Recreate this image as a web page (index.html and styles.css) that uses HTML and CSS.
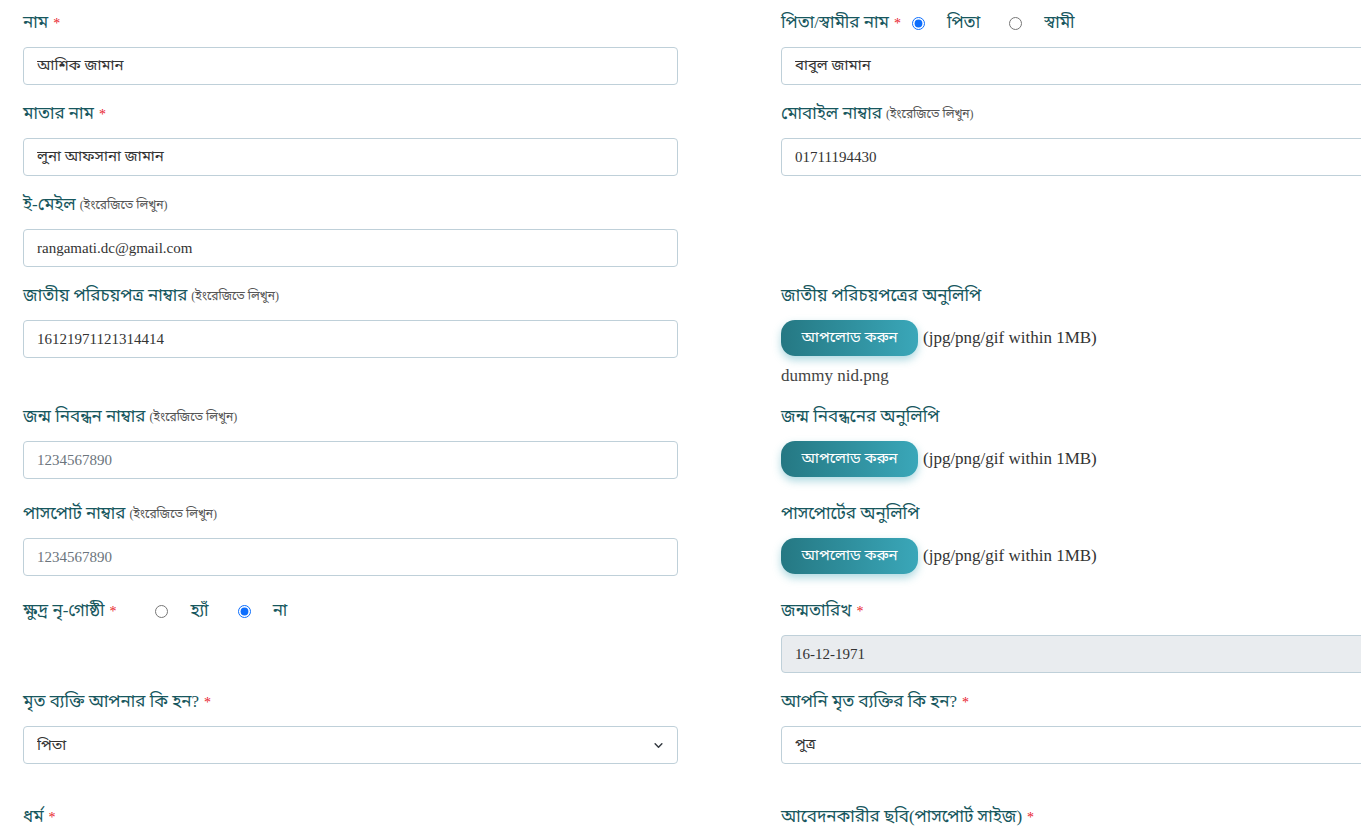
FILE: index.html
```html
<!DOCTYPE html>
<html lang="bn">
<head>
    <meta charset="UTF-8">
    <title>আবেদন ফর্ম</title>
    <link rel="stylesheet" href="styles.css">
</head>
<body>
    <form class="apply-form">
        <div class="form-row">
            <div class="field">
                <label class="field-label">নাম <span class="req">*</span></label>
                <input class="form-input" type="text" value="আশিক জামান">
            </div>
            <div class="field">
                <div class="field-label">পিতা/স্বামীর নাম <span class="req">*</span>
                    <label class="radio-opt"><input type="radio" name="guardian" checked> পিতা</label>
                    <label class="radio-opt"><input type="radio" name="guardian"> স্বামী</label>
                </div>
                <input class="form-input" type="text" value="বাবুল জামান">
            </div>
        </div>

        <div class="form-row">
            <div class="field">
                <label class="field-label">মাতার নাম <span class="req">*</span></label>
                <input class="form-input" type="text" value="লুনা আফসানা জামান">
            </div>
            <div class="field">
                <label class="field-label">মোবাইল নাম্বার <small class="hint">(ইংরেজিতে লিখুন)</small></label>
                <input class="form-input" type="text" value="01711194430">
            </div>
        </div>

        <div class="form-row">
            <div class="field">
                <label class="field-label">ই-মেইল <small class="hint">(ইংরেজিতে লিখুন)</small></label>
                <input class="form-input" type="text" value="rangamati.dc@gmail.com">
            </div>
            <div class="field"></div>
        </div>

        <div class="form-row">
            <div class="field">
                <label class="field-label">জাতীয় পরিচয়পত্র নাম্বার <small class="hint">(ইংরেজিতে লিখুন)</small></label>
                <input class="form-input" type="text" value="16121971121314414">
            </div>
            <div class="field">
                <label class="field-label">জাতীয় পরিচয়পত্রের অনুলিপি</label>
                <div class="upload">
                    <button type="button" class="upload-btn">আপলোড করুন</button>
                    <span class="upload-note">(jpg/png/gif within 1MB)</span>
                </div>
                <div class="file-name">dummy nid.png</div>
            </div>
        </div>

        <div class="form-row">
            <div class="field">
                <label class="field-label">জন্ম নিবন্ধন নাম্বার <small class="hint">(ইংরেজিতে লিখুন)</small></label>
                <input class="form-input" type="text" placeholder="1234567890">
            </div>
            <div class="field">
                <label class="field-label">জন্ম নিবন্ধনের অনুলিপি</label>
                <div class="upload">
                    <button type="button" class="upload-btn">আপলোড করুন</button>
                    <span class="upload-note">(jpg/png/gif within 1MB)</span>
                </div>
                <div class="file-name"></div>
            </div>
        </div>

        <div class="form-row">
            <div class="field">
                <label class="field-label">পাসপোর্ট নাম্বার <small class="hint">(ইংরেজিতে লিখুন)</small></label>
                <input class="form-input" type="text" placeholder="1234567890">
            </div>
            <div class="field">
                <label class="field-label">পাসপোর্টের অনুলিপি</label>
                <div class="upload">
                    <button type="button" class="upload-btn">আপলোড করুন</button>
                    <span class="upload-note">(jpg/png/gif within 1MB)</span>
                </div>
                <div class="file-name"></div>
            </div>
        </div>

        <div class="form-row">
            <div class="field">
                <div class="field-label">ক্ষুদ্র নৃ-গোষ্ঠী <span class="req">*</span>
                    <label class="radio-opt radio-wide"><input type="radio" name="ethnic"> হ্যাঁ</label>
                    <label class="radio-opt"><input type="radio" name="ethnic" checked> না</label>
                </div>
            </div>
            <div class="field">
                <label class="field-label">জন্মতারিখ <span class="req">*</span></label>
                <input class="form-input" type="text" value="16-12-1971" readonly>
            </div>
        </div>

        <div class="form-row row-spaced">
            <div class="field">
                <label class="field-label">মৃত ব্যক্তি আপনার কি হন? <span class="req">*</span></label>
                <select class="form-input form-select">
                    <option>পিতা</option>
                    <option>মাতা</option>
                    <option>স্বামী</option>
                    <option>স্ত্রী</option>
                </select>
            </div>
            <div class="field">
                <label class="field-label">আপনি মৃত ব্যক্তির কি হন? <span class="req">*</span></label>
                <input class="form-input" type="text" value="পুত্র">
            </div>
        </div>

        <div class="form-row">
            <div class="field">
                <label class="field-label">ধর্ম <span class="req">*</span></label>
            </div>
            <div class="field">
                <label class="field-label">আবেদনকারীর ছবি(পাসপোর্ট সাইজ) <span class="req">*</span></label>
            </div>
        </div>
    </form>
</body>
</html>
```

FILE: styles.css
```css
html, body {
    overflow: hidden;
}
body {
    margin: 0;
    background-color: #fff;
    font-family: 'Liberation Serif', 'Noto Sans Bengali', 'Noto Serif Bengali', 'Lohit Bengali', serif;
    color: #333;
}
.apply-form {
    padding: 10px 23px 0 23px;
    width: 1413px;
}
.form-row {
    display: grid;
    grid-template-columns: 655px 655px;
    column-gap: 103px;
    margin-bottom: 16px;
}
.row-spaced {
    margin-bottom: 40px;
}
.field-label {
    display: flex;
    align-items: center;
    box-sizing: border-box;
    height: 24px;
    padding-top: 3px;
    margin-bottom: 13px;
    font-size: 17px;
    color: #17575e;
    white-space: nowrap;
}
.req {
    color: #e8202a;
    font-size: 14px;
    margin-left: 5px;
}
.hint {
    font-size: 12px;
    color: #555;
    margin-left: 4px;
}
.radio-opt {
    display: flex;
    align-items: center;
    gap: 22px;
    margin-left: 11px;
    margin-right: 18px;
    color: #17575e;
}
.radio-wide {
    margin-left: 39px;
    margin-right: 18px;
}
.radio-opt input {
    margin: 0;
    width: 13px;
    height: 13px;
    accent-color: #0d6efd;
}
.form-input {
    display: block;
    box-sizing: border-box;
    width: 100%;
    height: 38px;
    padding: 0 13px;
    border: 1px solid #bfd0d9;
    border-radius: 4px;
    background-color: #fff;
    font-family: inherit;
    font-size: 15px;
    color: #333;
}
.form-input::placeholder {
    color: #6c757d;
}
.form-input[readonly] {
    background-color: #e9ecef;
}
.form-select {
    appearance: none;
    background-image: url("data:image/svg+xml,%3csvg xmlns='http://www.w3.org/2000/svg' viewBox='0 0 16 16'%3e%3cpath fill='none' stroke='%23343a40' stroke-linecap='round' stroke-linejoin='round' stroke-width='2.6' d='M2 5l6 6 6-6'/%3e%3c/svg%3e");
    background-repeat: no-repeat;
    background-position: right 14px center;
    background-size: 9px 9px;
}
.upload {
    display: flex;
    align-items: center;
    gap: 5px;
}
.upload-btn {
    width: 137px;
    height: 36px;
    border: none;
    border-radius: 14px;
    background: linear-gradient(90deg, #257883, #3aa7b9);
    box-shadow: 0 4px 8px rgba(56, 160, 180, 0.4);
    color: #fff;
    font-family: inherit;
    font-size: 15px;
    cursor: pointer;
}
.upload-note {
    font-size: 17px;
    color: #333;
}
.file-name {
    margin-top: 8px;
    font-size: 17px;
    line-height: 24px;
    color: #444;
}
```
